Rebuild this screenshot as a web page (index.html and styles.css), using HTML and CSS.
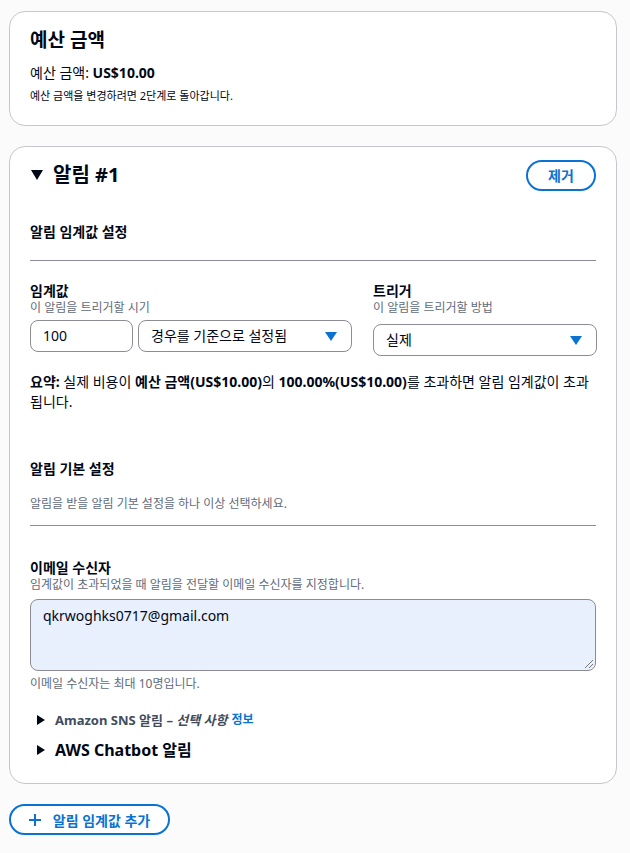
FILE: index.html
```html
<!DOCTYPE html>
<html lang="ko">
<head>
<meta charset="utf-8">
<link rel="stylesheet" href="styles.css">
</head>
<body>
<div class="page">
  <section class="card card-budget">
    <h2 class="card-title">예산 금액</h2>
    <p class="budget-line">예산 금액: <b>US$10.00</b></p>
    <p class="small">예산 금액을 변경하려면 2단계로 돌아갑니다.</p>
  </section>

  <section class="card card-alert">
    <div class="alert-header">
      <h2 class="card-title alert-title"><span class="tri-down"></span>알림 #1</h2>
      <button class="btn btn-remove">제거</button>
    </div>

    <h3 class="sub-title first">알림 임계값 설정</h3>
    <div class="divider"></div>

    <div class="threshold-grid">
      <div class="field">
        <div class="label">임계값</div>
        <div class="desc">이 알림을 트리거할 시기</div>
        <div class="row-inputs">
          <div class="input input-num">100</div>
          <div class="input select select-cond"><span>경우를 기준으로 설정됨</span><span class="caret"></span></div>
        </div>
      </div>
      <div class="field">
        <div class="label">트리거</div>
        <div class="desc">이 알림을 트리거할 방법</div>
        <div class="input select select-trigger"><span>실제</span><span class="caret"></span></div>
      </div>
    </div>

    <p class="summary"><b>요약:</b> 실제 비용이 <b>예산 금액(US$10.00)</b>의 <b>100.00%(US$10.00)</b>를 초과하면 알림 임계값이 초과됩니다.</p>

    <h3 class="sub-title second">알림 기본 설정</h3>
    <p class="desc pref-desc">알림을 받을 알림 기본 설정을 하나 이상 선택하세요.</p>
    <div class="divider divider-2"></div>

    <div class="label email-label">이메일 수신자</div>
    <div class="desc">임계값이 초과되었을 때 알림을 전달할 이메일 수신자를 지정합니다.</div>
    <div class="textarea">qkrwoghks0717@gmail.com<span class="grip"></span></div>
    <div class="desc hint">이메일 수신자는 최대 10명입니다.</div>

    <div class="expander sns"><span class="tri-right"></span><span class="exp-text">Amazon SNS 알림 – <i>선택 사항</i></span> <span class="info">정보</span></div>
    <div class="expander chatbot"><span class="tri-right"></span><span class="exp-text">AWS Chatbot 알림</span></div>
  </section>

  <button class="btn btn-add"><span class="plus"></span>알림 임계값 추가</button>
</div>
</body>
</html>
```

FILE: styles.css
```css
* { box-sizing: border-box; }
html, body { margin: 0; padding: 0; }
body {
  background: #fbfbfb;
  font-family: "Noto Sans", "Noto Sans CJK KR", sans-serif;
  color: #000716;
}
.page {
  padding: 11px 13px 0 9px;
  display: flex;
  flex-direction: column;
  align-items: flex-start;
}
p, h2, h3 { margin: 0; }
.card {
  width: 608px;
  background: #fff;
  border: 1px solid #c6c6cd;
  border-radius: 16px;
  padding: 0 20px;
}
.card-budget { padding-top: 17px; padding-bottom: 21px; }
.card-title {
  font-size: 19px;
  font-weight: 700;
  line-height: 22px;
}
.budget-line { margin-top: 12px; font-size: 14px; line-height: 20px; }
.small { margin-top: 5px; font-size: 11px; line-height: 16px; }

.card-alert { margin-top: 20px; padding-top: 12px; padding-bottom: 22px; }
.alert-header {
  display: flex;
  justify-content: space-between;
  align-items: center;
  height: 32px;
}
.alert-title { display: flex; align-items: center; font-size: 20px; }
.tri-down {
  width: 0; height: 0;
  border-left: 6.5px solid transparent;
  border-right: 6.5px solid transparent;
  border-top: 10px solid #000716;
  margin: 0 10px 0 1px;
}
.btn {
  font-family: inherit;
  background: #fff;
  border: 2px solid #0972d3;
  border-radius: 20px;
  color: #0972d3;
  font-weight: 700;
  font-size: 14px;
  padding: 0;
  display: flex;
  align-items: center;
  justify-content: center;
}
.btn-remove { width: 70px; height: 31px; }

.sub-title { font-size: 14px; font-weight: 700; line-height: 20px; }
.sub-title.first { margin-top: 31px; }
.divider { height: 1px; background: #8c8c94; margin-top: 18px; }

.threshold-grid {
  display: grid;
  grid-template-columns: 322px 224px;
  column-gap: 21px;
  margin-top: 21px;
}
.label { font-size: 14px; font-weight: 700; line-height: 18px; }
.desc { font-size: 12px; line-height: 16px; color: #5f6b7a; }
.row-inputs { display: flex; gap: 5px; margin-top: 4px; }
.input {
  height: 32px;
  border: 1px solid #8c8c94;
  border-radius: 8px;
  background: #fff;
  font-size: 14px;
  line-height: 30px;
  padding: 0 12px;
  color: #000716;
}
.input-num { width: 103px; }
.select { display: flex; justify-content: space-between; align-items: center; }
.select-cond { width: 214px; }
.select-trigger { width: 224px; margin-top: 8px; }
.caret {
  width: 0; height: 0;
  border-left: 6px solid transparent;
  border-right: 6px solid transparent;
  border-top: 9px solid #0972d3;
  margin-right: 2px;
}

.summary { margin-top: 16px; font-size: 14px; line-height: 20px; }
.sub-title.second { margin-top: 47px; }
.pref-desc { margin-top: 17px; }
.divider-2 { margin-top: 13px; }

.email-label { margin-top: 33px; }
.textarea {
  position: relative;
  margin-top: 6px;
  height: 72px;
  border: 1px solid #8c8c94;
  border-radius: 8px;
  background: #e8f0fe;
  font-size: 14px;
  line-height: 20px;
  padding: 6px 12px;
}
.grip {
  position: absolute;
  right: 2px; bottom: 2px;
  width: 8px; height: 8px;
  background: linear-gradient(135deg, transparent 45%, #777 45%, #777 55%, transparent 55%, transparent 70%, #777 70%, #777 80%, transparent 80%);
}
.hint { margin-top: 5px; }

.expander { display: flex; align-items: center; padding-left: 7px; }
.tri-right {
  width: 0; height: 0;
  border-top: 5.5px solid transparent;
  border-bottom: 5.5px solid transparent;
  border-left: 8px solid #000716;
  margin-right: 10px;
}
.sns { margin-top: 18px; line-height: 20px; }
.sns .exp-text { font-size: 13px; font-weight: 700; color: #414d5c; }
.sns i { font-weight: 700; }
.info { font-size: 12px; font-weight: 700; color: #0972d3; margin-left: 4px; }
.chatbot { margin-top: 9px; line-height: 22px; }
.chatbot .exp-text { font-size: 16px; font-weight: 700; }

.btn-add { margin-top: 20px; width: 161px; height: 31px; font-size: 14px; }
.plus {
  width: 12px; height: 12px;
  margin-right: 12px;
  background: linear-gradient(#0972d3, #0972d3) center/2px 12px no-repeat,
              linear-gradient(#0972d3, #0972d3) center/12px 2px no-repeat;
}
```
